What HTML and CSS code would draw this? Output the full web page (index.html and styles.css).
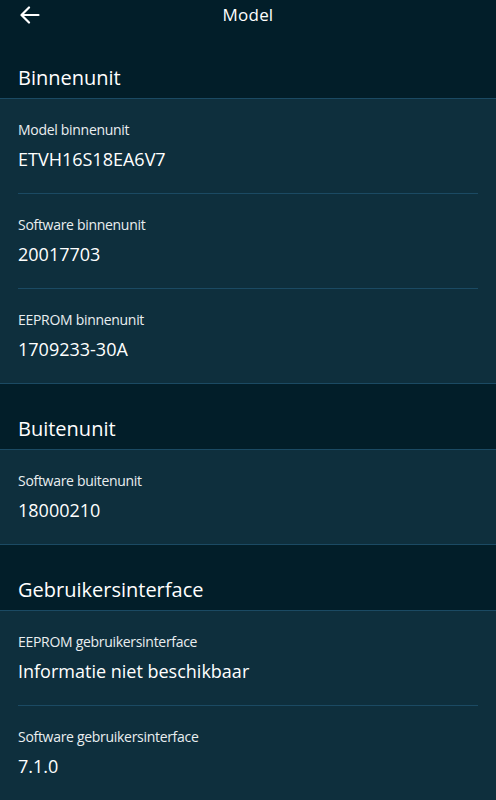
FILE: index.html
```html
<!DOCTYPE html>
<html>
	<head>
		<meta charset="UTF-8">
		<title>Model</title>
		<link rel="stylesheet" href="styles.css">
	</head>
	<body>
		<div class="topbar">
			<a href="#" class="back">
				<svg width="20" height="18" viewBox="0 0 20 18" fill="none" stroke="#fff" stroke-width="2.2" stroke-linecap="round" stroke-linejoin="round">
					<path d="M18.5 9H2"/>
					<path d="M9 1.5L1.5 9L9 16.5"/>
				</svg>
			</a>
			<span class="title">Model</span>
		</div>

		<div class="section-head">Binnenunit</div>
		<ul class="card">
			<li>
				<p class="label">Model binnenunit</p>
				<p class="value">ETVH16S18EA6V7</p>
			</li>
			<li>
				<p class="label">Software binnenunit</p>
				<p class="value">20017703</p>
			</li>
			<li>
				<p class="label">EEPROM binnenunit</p>
				<p class="value">1709233-30A</p>
			</li>
		</ul>

		<div class="section-head">Buitenunit</div>
		<ul class="card">
			<li>
				<p class="label">Software buitenunit</p>
				<p class="value">18000210</p>
			</li>
		</ul>

		<div class="section-head">Gebruikersinterface</div>
		<ul class="card">
			<li>
				<p class="label">EEPROM gebruikersinterface</p>
				<p class="value">Informatie niet beschikbaar</p>
			</li>
			<li>
				<p class="label">Software gebruikersinterface</p>
				<p class="value">7.1.0</p>
			</li>
		</ul>
	</body>
</html>
```

FILE: styles.css
```css
*{
	margin:0;
	padding:0;
}
body{
	background: #021e29;
	color: #fff;
	font-family: "Open Sans", "Noto Sans", sans-serif;
	width: 496px;
	height: 800px;
	overflow: hidden;
}
.topbar{
	height: 33px;
	box-sizing: border-box;
	padding-top: 4px;
	display: flex;
	justify-content: center;
	position: relative;
}
.back{
	position: absolute;
	left: 20px;
	top: 6px;
	display: block;
	line-height: 0;
}
.title{
	font-size: 17px;
	line-height: 22px;
	letter-spacing: 0.2px;
}
.section-head{
	height: 66px;
	box-sizing: border-box;
	padding: 0 18px 8px;
	display: flex;
	align-items: flex-end;
	font-size: 20px;
	line-height: 24px;
	border-bottom: 1px solid #1b4a63;
}
.card{
	list-style: none;
	background: #0e2f3d;
	border-bottom: 1px solid #1b4a63;
	padding: 0 18px;
}
.card li{
	height: 94px;
	box-sizing: border-box;
	padding-top: 22px;
	border-bottom: 1px solid #1b4a63;
}
.card li:not(:last-child){
	height: 95px;
}
.card li:last-child{
	border-bottom: none;
}
.label{
	font-size: 14px;
	color: #e9eef0;
	line-height: 18px;
	letter-spacing: -0.3px;
}
.value{
	font-size: 18px;
	margin-top: 8px;
	line-height: 24px;
}
```
